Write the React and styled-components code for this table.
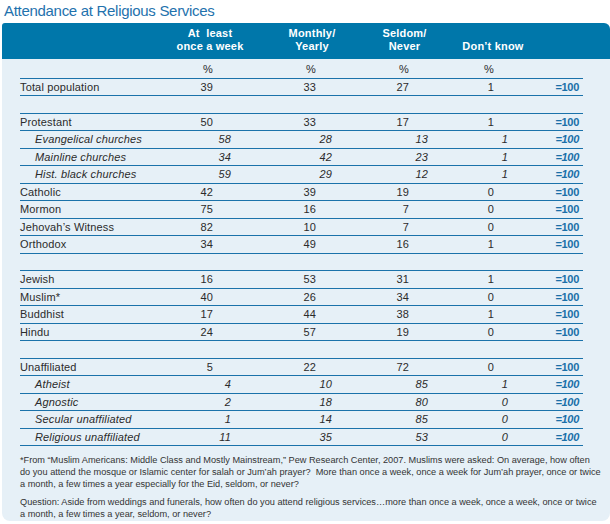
import React from "react";
import styled, { createGlobalStyle } from "styled-components";

const GlobalStyle = createGlobalStyle`
  html, body {
    margin: 0;
    padding: 0;
    background: #fff;
  }
  body {
    font-family: "Liberation Sans", Arial, sans-serif;
    color: #333;
  }
`;

const COLS = "150px 80px 124px 61px 116px 32px";

// right padding of each numeric column, for plain and for indented (italic) rows
const PAD = [37, 58, 26, 57];
const PAD_SUB = [19, 42, 7, 43];

const groups = [
  {
    rows: [{ label: "Total population", v: [39, 33, 27, 1] }],
  },
  {
    top: true,
    rows: [
      { label: "Protestant", v: [50, 33, 17, 1] },
      { label: "Evangelical churches", v: [58, 28, 13, 1], sub: true },
      { label: "Mainline churches", v: [34, 42, 23, 1], sub: true },
      { label: "Hist. black churches", v: [59, 29, 12, 1], sub: true },
      { label: "Catholic", v: [42, 39, 19, 0] },
      { label: "Mormon", v: [75, 16, 7, 0] },
      { label: "Jehovah’s Witness", v: [82, 10, 7, 0] },
      { label: "Orthodox", v: [34, 49, 16, 1] },
    ],
  },
  {
    top: true,
    rows: [
      { label: "Jewish", v: [16, 53, 31, 1] },
      { label: "Muslim*", v: [40, 26, 34, 0] },
      { label: "Buddhist", v: [17, 44, 38, 1] },
      { label: "Hindu", v: [24, 57, 19, 0] },
    ],
  },
  {
    top: true,
    rows: [
      { label: "Unaffiliated", v: [5, 22, 72, 0] },
      { label: "Atheist", v: [4, 10, 85, 1], sub: true },
      { label: "Agnostic", v: [2, 18, 80, 0], sub: true },
      { label: "Secular unaffiliated", v: [1, 14, 85, 0], sub: true },
      { label: "Religious unaffiliated", v: [11, 35, 53, 0], sub: true },
    ],
  },
];

const App = () => {
  return (
    <>
      <GlobalStyle />
      <Page>
        <Title>Attendance at Religious Services</Title>
        <Panel>
          <Header>
            <HeadRow>
              <span />
              <HeadCell>
                At&nbsp; least
                <br />
                once a week
              </HeadCell>
              <HeadCell>
                Monthly/
                <br />
                Yearly
              </HeadCell>
              <HeadCell>
                Seldom/
                <br />
                Never
              </HeadCell>
              <HeadCell>Don’t know</HeadCell>
              <span />
            </HeadRow>
          </Header>

          <Body>
            {groups.map((g, gi) => (
              <Group key={gi} $top={g.top}>
                {gi === 0 && (
                  <Row>
                    <Label />
                    {PAD.map((p, i) => (
                      <Num key={i} $pad={p}>
                        %
                      </Num>
                    ))}
                    <span />
                  </Row>
                )}
                {g.rows.map((r) => (
                  <Row key={r.label} $sub={r.sub}>
                    <Label $sub={r.sub}>{r.label}</Label>
                    {r.v.map((n, i) => (
                      <Num key={i} $pad={r.sub ? PAD_SUB[i] : PAD[i]}>
                        {n}
                      </Num>
                    ))}
                    <Total>=100</Total>
                  </Row>
                ))}
              </Group>
            ))}

            <Notes>
              <p>
                *From “Muslim Americans: Middle Class and Mostly Mainstream,” Pew
                Research Center, 2007. Muslims were asked: On average, how often
                <br />
                do you attend the mosque or Islamic center for salah or Jum’ah
                prayer?&nbsp; More than once a week, once a week for Jum’ah
                prayer, once or twice
                <br />a month, a few times a year especially for the Eid, seldom,
                or never?
              </p>
              <p>
                Question: Aside from weddings and funerals, how often do you
                attend religious services…more than once a week, once a week,
                once or twice
                <br />a month, a few times a year, seldom, or never?
              </p>
            </Notes>
          </Body>
        </Panel>
      </Page>
    </>
  );
};

export default App;

const Page = styled.div`
  width: 610px;
  height: 524px;
  overflow: hidden;
`;

const Title = styled.h1`
  margin: 0;
  padding: 1px 0 0 4px;
  height: 23px;
  box-sizing: border-box;
  font-size: 15px;
  font-weight: normal;
  letter-spacing: -0.3px;
  line-height: 20px;
  color: #1f72ad;
`;

const Panel = styled.div`
  margin-left: 2px;
  width: 608px;
  height: 498px;
  background: #e6f0f7;
  border-radius: 3px 6px 8px 8px;
  overflow: hidden;
`;

const Header = styled.div`
  background: #0077aa;
  height: 36px;
  padding: 4px 0 0 18px;
  box-sizing: border-box;
`;

const HeadRow = styled.div`
  display: grid;
  grid-template-columns: ${COLS};
  align-items: end;
`;

const HeadCell = styled.div`
  text-align: center;
  color: #fff;
  font-size: 11px;
  font-weight: bold;
  line-height: 13px;
  letter-spacing: 0.2px;
`;

const Body = styled.div`
  padding: 2px 0 0 18px;
`;

const Group = styled.div`
  width: 563px;
  margin-top: ${(p) => (p.$top ? "16.5px" : "0")};
  border-top: ${(p) => (p.$top ? "1px solid #1a72aa" : "none")};
`;

const Row = styled.div`
  display: grid;
  grid-template-columns: ${COLS};
  height: 16.5px;
  line-height: 16.5px;
  border-bottom: 1px solid #1a72aa;
  font-size: 11px;
  letter-spacing: 0.15px;
  font-style: ${(p) => (p.$sub ? "italic" : "normal")};
  color: #2b2b2b;
`;

const Label = styled.div`
  padding-left: ${(p) => (p.$sub ? "15px" : "0")};
  white-space: nowrap;
`;

const Num = styled.div`
  text-align: right;
  padding-right: ${(p) => p.$pad}px;
`;

const Total = styled.div`
  text-align: right;
  padding-right: 4px;
  font-weight: bold;
  color: #1a6fa8;
  letter-spacing: -0.3px;
`;

const Notes = styled.div`
  width: 588px;
  margin-top: 8px;
  font-size: 9.2px;
  line-height: 12px;
  color: #333;

  p {
    margin: 0 0 6px;
    white-space: nowrap;
  }
`;
